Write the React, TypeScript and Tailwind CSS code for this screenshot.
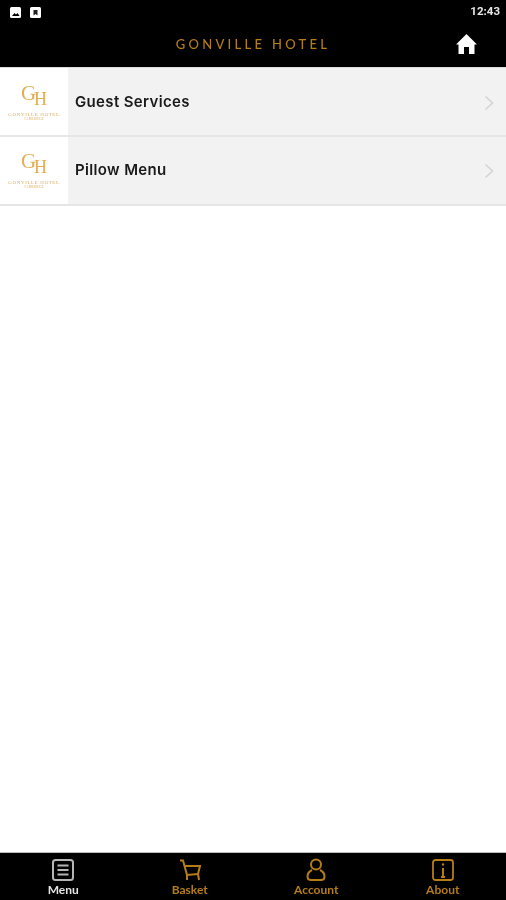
const gold = "#b57d14";

function Row({ label, shift }: { label: string; shift?: boolean }) {
  return (
    <div className="flex h-[69px] items-stretch bg-[#f2f2f2] border-b-2 border-[#e6e6e6]">
      <div className={`flex w-[68px] flex-col items-center justify-start bg-white blur-[0.4px] ${shift ? "pt-[14px]" : "pt-[15px]"}`}>
        <div className="flex h-[26px] items-start font-['Liberation_Serif',serif] text-[#e3ad52] leading-none">
          <span className="text-[21px] leading-[20px]">G</span>
          <span className="mt-[7px] -ml-[2px] text-[18px] leading-[18px]">H</span>
        </div>
        <div className="mt-[3px] whitespace-nowrap font-['Liberation_Serif',serif] text-[5px] leading-[5px] tracking-[0.6px] text-[#d9ad66]">
          GONVILLE HOTEL
        </div>
        <div className="whitespace-nowrap font-['Liberation_Serif',serif] text-[3px] leading-[4px] tracking-[0.2px] text-[#d9ad66]">
          CAMBRIDGE
        </div>
      </div>
      <div className={`flex flex-1 items-center pl-[7px] pr-[12px] ${shift ? "" : "pt-[2px]"}`}>
        <span className="flex-1 font-['Inter',sans-serif] text-[15px] font-semibold tracking-[0.35px] text-[#1a1a1a] blur-[0.4px]">
          {label}
        </span>
        <svg width="10" height="16" viewBox="0 0 10 16" fill="none" stroke="#d4d4d4" strokeWidth="1.6">
          <path d="M1.500 1.500 8.500 8 1.500 14.500" />
        </svg>
      </div>
    </div>
  );
}

function Tab({ label, color, children }: { label: string; color: string; children: React.ReactNode }) {
  return (
    <div className="flex flex-1 flex-col items-center pt-[5px]" style={{ color }}>
      <div className="flex h-[24px] items-center justify-center blur-[0.3px]">{children}</div>
      <span className="mt-[1px] font-['Lato',sans-serif] text-[12px] font-bold leading-[14px] blur-[0.5px]">{label}</span>
    </div>
  );
}

export default function App() {
  return (
    <div className="flex h-[900px] w-[506px] flex-col overflow-hidden bg-white">
      <div className="bg-black">
        <div className="flex h-[24px] items-center justify-between pl-[10px] pr-[6px]">
          <div className="flex items-center gap-[9px] blur-[0.4px]">
            <svg width="11" height="11" viewBox="0 0 11 11">
              <rect width="11" height="11" rx="1.500" fill="#fff" />
              <path d="M2 9 4.500 6 6 7.500 7.500 6 9.500 9Z" fill="#000" />
            </svg>
            <svg width="11" height="11" viewBox="0 0 11 11">
              <rect width="11" height="11" rx="1.500" fill="#fff" />
              <path d="M3.500 8.500V3h4v5.500L5.500 7Z" fill="#222" />
            </svg>
          </div>
          <span className="font-['Roboto',sans-serif] text-[11.500px] font-bold text-[#e8e8e8] blur-[0.4px]">12:43</span>
        </div>
        <div className="relative flex h-[43px] items-center justify-center pb-[2px]">
          <span className="font-['Lato',sans-serif] text-[13px] font-medium tracking-[3.300px] text-[#b57d14] blur-[0.4px]">
            GONVILLE HOTEL
          </span>
          <svg className="absolute right-[29px] top-[10px] blur-[0.3px]" width="21" height="20" viewBox="0 0 21 20" fill="#fff">
            <path fillRule="evenodd" d="M10.500 0 0 10.500h2.500V20h16V10.500H21ZM8 13h5v7H8Z" />
          </svg>
        </div>
      </div>
      <div className="h-[1px] bg-[#dcdcdc]" />
      <Row label="Guest Services" />
      <Row label="Pillow Menu" shift />
      <div className="flex-1" />
      <div className="h-[1px] bg-[#bdbdbd]" />
      <div className="flex h-[47px] bg-black">
        <Tab label="Menu" color="#e4e4e4">
          <svg width="22" height="22" viewBox="0 0 22 22" fill="none" stroke="#b5b5b5" strokeWidth="2">
            <rect x="1" y="1" width="20" height="20" rx="2.500" />
            <path d="M5.500 6.500h11M5.500 11h11M5.500 15.500h11" strokeWidth="2" />
          </svg>
        </Tab>
        <Tab label="Basket" color={gold}>
          <svg width="22" height="22" viewBox="0 0 22 22" fill="none" stroke={gold} strokeWidth="2">
            <path d="M1 1.500h3l4 14.500 11-1" />
            <path d="M5 7h16l-2 8" />
            <path d="M8 16v5M19 15l1 6" />
          </svg>
        </Tab>
        <Tab label="Account" color={gold}>
          <svg width="20" height="24" viewBox="0 0 20 24" fill="none" stroke={gold} strokeWidth="2">
            <circle cx="10" cy="6.500" r="5" />
            <path d="M6 12C3 13.500 1.500 15.500 1.500 18.500 1.500 21 3 22 5 22h10c2 0 3.500-1 3.500-3.500 0-3-1.500-5-4.500-6.500" />
          </svg>
        </Tab>
        <Tab label="About" color={gold}>
          <svg width="22" height="22" viewBox="0 0 22 22" fill="none" stroke={gold} strokeWidth="1.800">
            <rect x="1" y="1" width="20" height="20" rx="2.500" />
            <path d="M11 9v9M9 18h4" strokeWidth="2" />
            <circle cx="11" cy="5.500" r="1.200" fill={gold} stroke="none" />
          </svg>
        </Tab>
      </div>
    </div>
  );
}
